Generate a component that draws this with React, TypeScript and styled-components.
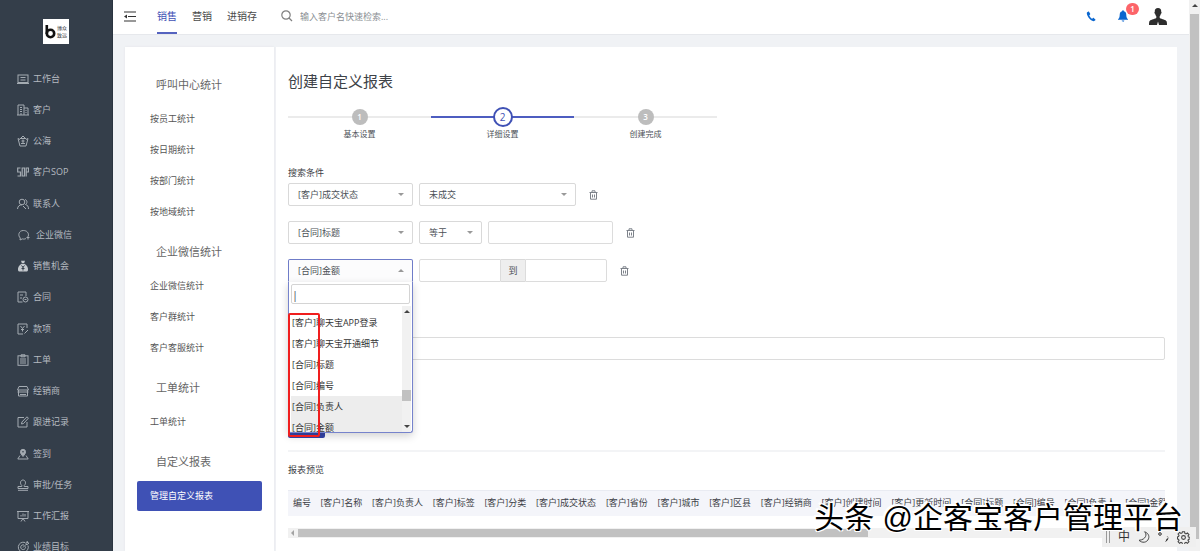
import React from 'react';
import styled, { createGlobalStyle } from 'styled-components';

const Global = createGlobalStyle`
  *, *::before, *::after { box-sizing: border-box; }
  html, body, #root { height: 100%; margin: 0; }
  body {
    overflow: hidden;
    font-family: "Open Sans", "Noto Sans CJK SC", sans-serif;
    font-size: 9px;
    line-height: 16px;
    color: #4c5157;
    background: #f0f2f5;
  }
  button, input, select { font: inherit; color: inherit; margin: 0; }
  a { color: inherit; text-decoration: none; }
  ul { list-style: none; margin: 0; padding: 0; }
  h1, h2, h3 { margin: 0; font-weight: 400; }
`;

const Shell = styled.div`
  display: flex;
  height: 100vh;
  overflow: hidden;
`;

/* ---------- dark navigation ---------- */
const Sidebar = styled.aside`
  display: flex;
  flex-direction: column;
  flex: 0 0 113px;
  overflow: hidden;
  background: #343e4a;
  border-right: 1px solid #2a3440;
  color: #b4bac0;
`;

const Logo = styled.div`
  display: flex;
  align-items: center;
  gap: 1px;
  flex: none;
  align-self: center;
  width: 26px;
  height: 25px;
  margin: 19px 0;
  padding-left: 2px;
  background: #fff;
  color: #333;
  font-size: 5px;
  line-height: 7px;
`;

const MainNav = styled.ul`
  display: flex;
  flex-direction: column;
  flex: 0 0 500px;
`;

const MainNavItem = styled.li`
  display: flex;
  flex: 1;
`;

const MainNavLink = styled.a<{ $wide?: boolean }>`
  display: flex;
  align-items: center;
  gap: ${(p) => (p.$wide ? 6 : 4)}px;
  padding-left: ${(p) => (p.$wide ? 18 : 17)}px;
  white-space: nowrap;
`;

const LineIcon = styled.svg`
  width: 12px;
  height: 12px;
  flex: none;
  fill: none;
  stroke: #a4abb2;
  stroke-width: 1;
`;

/* ---------- top bar ---------- */
const Main = styled.div`
  display: flex;
  flex-direction: column;
  flex: 1;
  min-width: 0;
`;

const TopBar = styled.header`
  display: flex;
  align-items: center;
  flex: 0 0 35px;
  padding: 0 22px 2px 11px;
  background: #fff;
  border-bottom: 1px solid #e6e8ec;
`;

const IconButton = styled.button`
  display: flex;
  padding: 0;
  border: 0;
  background: none;
`;

const Tabs = styled.nav`
  display: flex;
  gap: 15px;
  align-self: stretch;
  margin: 0 24px 0 21px;
`;

const Tab = styled.a<{ $active?: boolean }>`
  position: relative;
  font-size: 10px;
  line-height: 32px;
  color: ${(p) => (p.$active ? '#3f51b5' : '#4a4a4a')};
  &::after {
    content: '';
    display: ${(p) => (p.$active ? 'block' : 'none')};
    position: absolute;
    left: 0;
    right: 0;
    bottom: -2px;
    height: 2px;
    background: #5563bf;
  }
`;

const Search = styled.label`
  display: flex;
  align-items: center;
  gap: 7px;
  flex: 1;
  input {
    width: 160px;
    height: 20px;
    padding: 0;
    border: 0;
    outline: 0;
    font-size: 9px;
  }
  input::placeholder { color: #8b8f94; }
`;

const TopActions = styled.div`
  display: flex;
  align-items: center;
`;

const BellButton = styled(IconButton)`
  position: relative;
  margin: 0 21px 0 22px;
`;

const Badge = styled.span`
  position: absolute;
  top: -7px;
  left: 8px;
  width: 13px;
  height: 12px;
  border-radius: 6px;
  background: #fc6469;
  color: #fff;
  font-size: 8px;
  font-weight: 600;
  line-height: 12px;
  text-align: center;
`;

/* ---------- work area ---------- */
const Work = styled.div`
  display: flex;
  flex: 1;
  min-height: 0;
  gap: 2px;
  padding: 12px 12px 0;
`;

const ReportNav = styled.nav`
  flex: 0 0 149px;
  padding: 14px 12px 0;
  background: #fff;
  box-shadow: 0 0 2px #e2e4e8;
`;

const GroupTitle = styled.h2`
  height: 43px;
  padding: 4px 0 0 19px;
  font-size: 11px;
  line-height: 40px;
  color: #666;
`;

const ReportLink = styled.a<{ $active?: boolean }>`
  display: block;
  height: ${(p) => (p.$active ? 30 : 31)}px;
  padding-left: 13px;
  line-height: 30px;
  border-radius: 2px;
  background: ${(p) => (p.$active ? '#3f51b5' : 'transparent')};
  color: ${(p) => (p.$active ? '#fff' : '#555')};
`;

const Panel = styled.main`
  flex: 1;
  min-width: 0;
  padding: 22px 12px 0;
  background: #fff;
`;

const Title = styled.h1`
  font-size: 15px;
  line-height: 24px;
  color: #3d4247;
`;

const Steps = styled.ol`
  display: flex;
  width: 429px;
  margin: 14px 0 24px;
  padding: 0;
  list-style: none;
`;

const Step = styled.li<{ $active?: boolean }>`
  display: flex;
  flex-direction: column;
  align-items: center;
  flex: 1;
  font-size: 8px;
  line-height: 14px;
  background: linear-gradient(${(p) => (p.$active ? '#4d5dc0, #4d5dc0' : '#ebebeb, #ebebeb')}) 0 9px / 100% 2px no-repeat;
`;

const StepDot = styled.span<{ $active?: boolean }>`
  display: grid;
  place-items: center;
  width: ${(p) => (p.$active ? 20 : 16)}px;
  height: ${(p) => (p.$active ? 20 : 16)}px;
  margin: ${(p) => (p.$active ? 0 : 2)}px 0;
  border-radius: 50%;
  border: ${(p) => (p.$active ? '2px solid #3f51b5' : '0')};
  background: ${(p) => (p.$active ? '#fff' : '#bdbdbd')};
  color: ${(p) => (p.$active ? '#3f51b5' : '#fff')};
  font-size: ${(p) => (p.$active ? 10 : 8)}px;
  font-weight: ${(p) => (p.$active ? 400 : 600)};
`;

const Label = styled.h3`
  font-size: 9px;
  line-height: 16px;
  color: #3c4046;
`;

const Filter = styled.div`
  display: flex;
  align-items: center;
  gap: 6px;
  height: 23px;
  margin: 2px 0 15px;
`;

const SelectBox = styled.div<{ $width: number }>`
  display: flex;
  align-items: center;
  position: relative;
  width: ${(p) => p.$width}px;
  select {
    appearance: none;
    width: 100%;
    height: 23px;
    padding: 0 20px 0 9px;
    border: 1px solid #d9d9d9;
    border-radius: 2px;
    background: #fff;
    outline: 0;
  }
`;

const Caret = styled.span<{ $up?: boolean }>`
  position: absolute;
  right: 9px;
  border: 3px solid transparent;
  border-top-width: ${(p) => (p.$up ? 0 : 3)}px;
  border-bottom-width: ${(p) => (p.$up ? 3 : 0)}px;
  border-top-color: #999;
  border-bottom-color: #999;
`;

const TextInput = styled.input<{ $width?: number }>`
  width: ${(p) => (p.$width ? `${p.$width}px` : '100%')};
  height: 23px;
  padding: 0 8px;
  border: 1px solid #dcdcdc;
  border-radius: 2px;
  background: #fff;
  outline: 0;
`;

const Range = styled.div`
  display: flex;
  ${TextInput}:first-child { border-radius: 2px 0 0 2px; }
  ${TextInput}:last-child { border-radius: 0 2px 2px 0; }
`;

const RangeText = styled.span`
  width: 24px;
  height: 23px;
  border: solid #d9d9d9;
  border-width: 1px 0;
  background: #eee;
  line-height: 21px;
  text-align: center;
`;

const DeleteButton = styled(IconButton)`
  margin-left: 7px;
`;

const OpenTrigger = styled.button`
  width: 100%;
  height: 23px;
  padding: 0 9px;
  border: 1px solid #6f7cc8;
  border-bottom-color: transparent;
  border-radius: 2px 2px 0 0;
  background: #fcfcfd;
  text-align: left;
`;

const Menu = styled.div`
  position: absolute;
  top: 23px;
  left: 0;
  z-index: 2;
  width: 100%;
  height: 151px;
  padding: 2px 1px 1px 2px;
  border: 1px solid #7683cc;
  border-top: 0;
  border-radius: 0 0 3px 3px;
  background: #fff;
  box-shadow: 0 3px 8px rgba(0, 0, 0, 0.18);
`;

const MenuSearch = styled.input`
  display: block;
  width: 119px;
  height: 20px;
  padding: 0;
  border: 1px solid #d4d4d4;
  border-radius: 2px;
  outline: 0;
  font-size: 11px;
`;

const MenuBody = styled.div`
  display: flex;
  height: 126px;
  margin-top: 2px;
`;

const Options = styled.ul`
  flex: 1;
  padding-top: 6px;
  overflow: hidden;
`;

const Option = styled.li<{ $shade?: boolean }>`
  height: 21px;
  padding-left: 1px;
  line-height: 21px;
  white-space: nowrap;
  color: #333;
  background: ${(p) => (p.$shade ? '#ededed' : 'transparent')};
`;

const MenuTrack = styled.div`
  display: flex;
  flex-direction: column;
  align-items: center;
  justify-content: space-between;
  width: 9px;
  padding: 4px 0;
  background: #f1f1f1;
`;

const MenuThumb = styled.div`
  width: 9px;
  height: 11px;
  margin-top: 73px;
  margin-bottom: 20px;
  background: #c1c1c1;
`;

const Triangle = styled.span<{ $up?: boolean; $tone?: string }>`
  width: 0;
  border: 3px solid transparent;
  border-top-width: ${(p) => (p.$up ? 0 : 3)}px;
  border-bottom-width: ${(p) => (p.$up ? 3 : 0)}px;
  border-top-color: ${(p) => p.$tone ?? '#444'};
  border-bottom-color: ${(p) => p.$tone ?? '#444'};
`;

const Highlight = styled.div`
  position: absolute;
  top: 54px;
  left: 0;
  z-index: 3;
  width: 32px;
  height: 124px;
  border: 2px solid #f01e1e;
  border-radius: 2px;
`;

const NameField = styled.div`
  margin-top: 55px;
`;

const Submit = styled.button`
  display: block;
  width: 37px;
  height: 23px;
  margin: 55px 0 12px;
  padding: 0;
  border: 0;
  border-radius: 2px;
  background: #3444aa;
  color: #fff;
`;

const Preview = styled.section`
  padding-top: 10px;
  border-top: 2px solid #f3f4f6;
`;

const TableClip = styled.div`
  margin-top: 12px;
  overflow: hidden;
`;

const Table = styled.table`
  width: 884px;
  border-collapse: collapse;
  white-space: nowrap;
  background: #f4f5fa;
  th {
    height: 25px;
    padding: 0 4px 0 5px;
    border-top: 1px solid #e9ebf2;
    font-weight: 400;
    color: #3c4046;
    text-align: left;
  }
`;

const HTrack = styled.div`
  display: flex;
  align-items: center;
  height: 10px;
  margin-top: 12px;
  background: #f1f1f1;
`;

const HArrow = styled.span`
  margin: 0 4px 0 3px;
  border: 3px solid transparent;
  border-left-width: 0;
  border-right-color: #a3a3a3;
`;

const HThumb = styled.div`
  width: 65%;
  height: 8px;
  background: #c1c1c1;
`;

/* ---------- window scroll bar ---------- */
const PageTrack = styled.div`
  display: flex;
  flex-direction: column;
  align-items: center;
  flex: 0 0 11px;
  padding-top: 4px;
  background: #f1f1f1;
`;

const PageThumb = styled.div`
  width: 9px;
  height: 96%;
  margin: 7px 0 11px;
  background: #c1c1c1;
`;

/* ---------- floating layers ---------- */
const ImeBar = styled.div`
  position: absolute;
  right: 4px;
  bottom: 4px;
  z-index: 4;
  display: flex;
  align-items: center;
  gap: 8px;
  height: 20px;
  padding: 0 6px 0 4px;
  background: #efefef;
  color: #333;
  font-size: 12px;
`;

const Watermark = styled.div`
  position: absolute;
  right: 17px;
  bottom: 11px;
  z-index: 5;
  font-family: "Liberation Sans", "Noto Sans CJK SC", sans-serif;
  font-size: 30px;
  line-height: 44px;
  white-space: nowrap;
  color: #000;
  text-shadow: -1px -1px 0 #fff, 1px -1px 0 #fff, -1px 1px 0 #fff, 1px 1px 0 #fff, -2px -2px 0 #fff;
`;

const navItems: { text: string; wide?: boolean; icon: React.ReactNode }[] = [
  { text: '工作台', icon: <><rect x="1" y="2" width="10" height="7.500" /><path d="M3.500 4.500h5M3.500 7h5M0 10.500h12" /></> },
  { text: '客户', icon: <><path d="M1 11V1h6v10M7 4h4v7M0 11h12M3 3.500h2M3 5.500h2M3 7.500h2M9 6v1M9 8v1M4 9v2" /></> },
  { text: '公海', icon: <><path d="M3 3.500h6M1 3.500l2 7.500h6l2-7.500-2 1M1 3.500l2 1M4 3l2-2 2 2M6 4.500v4M4.500 6h3M4 8.500h4" /></> },
  { text: '客户SOP', icon: <><path d="M3.500 2H.7v4h2.800v4H.5M5.200 2h2.300v8H5.200zM9.200 10.500V2h2.300v4H9.200" strokeWidth="1.200" /></> },
  { text: '联系人', icon: <><circle cx="5" cy="4" r="2.800" /><path d="M.5 11c.3-3 2-4.200 4.500-4.200M8 1.500c2.500.5 2.500 4 .5 5 2 .5 3 2 3 4.500M6 8l3 3" /></> },
  { text: '企业微信', wide: true, icon: <><path d="M8 9.500c-1 .6-2.500.8-3.700.4L2 11l.3-2C-.5 6.500.8 1.500 5.300 1.500c3.700 0 5.700 2.500 5 5.500M8.500 8.500h3M10 7v3.500" /></> },
  { text: '销售机会', icon: <><path d="M4 .8h4L7.200 3h-2.400zM4.600 3.800h2.800c2.500 1.500 4 4 3.600 6.200-.2 1-.8 1.500-1.800 1.500H2.800c-1 0-1.600-.5-1.800-1.500-.4-2.200 1.100-4.700 3.600-6.200z" fill="#c3c8cd" stroke="none" /><path d="M4.500 5.500L6 7.300l1.500-1.800M6 7v3.500M4.500 8.500h3" stroke="#343e4a" /></> },
  { text: '合同', icon: <><path d="M5.500 11H1V1h8v4M3 4h3M3 7h2" /><circle cx="8.500" cy="8.500" r="2.500" /><path d="M7.500 8.500h2" /></> },
  { text: '款项', icon: <><path d="M6 11H1V1h9v4M3.500 3l2 2.500 2-2.500M5.500 5.500v3M4 6.500h3M7.500 10.500L11 7" /></> },
  { text: '工单', icon: <><rect x="1" y="1.800" width="10" height="9.500" /><path d="M4 .8h4v2H4zM3 5h6M3 7h6M3 9h6" /></> },
  { text: '经销商', icon: <><path d="M2 1.500h8l1.500 3.500H.5zM1.500 5v6h9V5M.5 7h11M3 9.500h6" /></> },
  { text: '跟进记录', icon: <><path d="M7 1.500H1v9.500h9V6M4.500 8l.4-2L10 .8l1.400 1.400L6.500 7.500z" /></> },
  { text: '签到', icon: <><path d="M6 8.500C4.500 6.500 3.500 5.500 3.500 3.800a2.500 2.500 0 015 0C8.500 5.500 7.500 6.500 6 8.500z" fill="#a4abb2" /><circle cx="6" cy="3.700" r=".8" fill="#343e4a" stroke="none" /><path d="M3 7.500L.8 11h10.400L9 7.500" /></> },
  { text: '审批/任务', icon: <><path d="M4.800 6.500C2.500 4.500 3.500 1 6 1s3.500 3.500 1.200 5.500M4.800 6.500V7.500H1v2h10v-2H7.200v-1M1 11.300h10" /></> },
  { text: '工作汇报', icon: <><path d="M0 1.500h12M1 1.500v7h10v-7M4 11.500L6 8.500l2 3M4 6.500V5M6 6.500V3.500M8 6.500V4" /></> },
  { text: '业绩目标', icon: <><path d="M8 1.500a5 5 0 103 3M7 4a2.400 2.400 0 101.400 1.500M6 6.500L9 3.500M9 3.500V1.500L10.500.5v1.500H12L10.500 3.500z" /></> },
];

const reportGroups = [
  { title: '呼叫中心统计', links: ['按员工统计', '按日期统计', '按部门统计', '按地域统计'] },
  { title: '企业微信统计', links: ['企业微信统计', '客户群统计', '客户客服统计'] },
  { title: '工单统计', links: ['工单统计'] },
  { title: '自定义报表', links: ['管理自定义报表'] },
];

const columns = [
  '编号', '[客户]名称', '[客户]负责人', '[客户]标签', '[客户]分类', '[客户]成交状态', '[客户]省份', '[客户]城市',
  '[客户]区县', '[客户]经销商', '[客户]创建时间', '[客户]更新时间', '[合同]标题', '[合同]编号', '[合同]负责人', '[合同]金额',
];

const options = ['[客户]聊天宝APP登录', '[客户]聊天宝开通细节', '[合同]标题', '[合同]编号', '[合同]负责人', '[合同]金额'];

const Trash = () => (
  <DeleteButton aria-label="删除">
    <svg width="9" height="10" viewBox="0 0 9 10" fill="none" stroke="#7d828a">
      <path d="M.5 2.500h8M3 2V.8h3V2M1.500 2.500v6.700h6V2.500M3.500 4.500v3M5.500 4.500v3" />
    </svg>
  </DeleteButton>
);

const Select = ({ width, value, name }: { width: number; value: string; name: string }) => (
  <SelectBox $width={width}>
    <select aria-label={name} defaultValue={value}>
      <option>{value}</option>
    </select>
    <Caret />
  </SelectBox>
);

export default function App() {
  return (
    <Shell>
      <Global />
      <Sidebar>
        <Logo>
          <svg width="11" height="15" viewBox="0 0 11 15" fill="none" stroke="#111" strokeWidth="2.600">
            <path d="M1.800 1v9" />
            <circle cx="5.500" cy="9.500" r="3.700" />
          </svg>
          <span>博众<br />致远</span>
        </Logo>
        <MainNav>
          {navItems.map((item) => (
            <MainNavItem key={item.text}>
              <MainNavLink href="#" $wide={item.wide}>
                <LineIcon viewBox="0 0 12 12">{item.icon}</LineIcon>
                {item.text}
              </MainNavLink>
            </MainNavItem>
          ))}
        </MainNav>
      </Sidebar>

      <Main>
        <TopBar>
          <IconButton aria-label="收起菜单">
            <svg width="12" height="11" viewBox="0 0 12 11" fill="none" stroke="#333" strokeWidth="1.200">
              <path d="M0 1h12M4 5.500h8M0 10h12" />
              <path d="M0 5.500L3 3.500v4z" fill="#333" stroke="none" />
            </svg>
          </IconButton>
          <Tabs>
            <Tab href="#" $active>销售</Tab>
            <Tab href="#">营销</Tab>
            <Tab href="#">进销存</Tab>
          </Tabs>
          <Search>
            <svg width="12" height="12" viewBox="0 0 12 12" fill="none" stroke="#808080" strokeWidth="1.200">
              <circle cx="5" cy="5" r="4.200" />
              <path d="M8 8l3 3" />
            </svg>
            <input placeholder="输入客户名快速检索..." aria-label="搜索客户" />
          </Search>
          <TopActions>
            <IconButton aria-label="电话">
              <svg width="10" height="11" viewBox="0 0 11 12" fill="#0a66cf">
                <path d="M2.600.5L1 1.500C.2 4 4 10.500 8.500 11.200L10.300 10c.2-.3.200-.6 0-.8L8.500 7.600c-.3-.2-.6-.2-.8 0l-.9.800C5.300 7.800 4 6 3.600 4.500l.9-.8c.2-.2.200-.4.100-.7L3.300.7c-.1-.2-.4-.3-.7-.2z" />
              </svg>
            </IconButton>
            <BellButton aria-label="通知">
              <svg width="10" height="12" viewBox="0 0 10 12" fill="#0a66cf">
                <path d="M5 .3c.6 0 .9.400.9.900C7.700 1.700 8.300 3 8.300 5c0 2 .5 3.200 1.700 4.300v.5H0v-.5C1.200 8.200 1.700 7 1.700 5c0-2 .6-3.300 2.400-3.800C4.100.7 4.400.3 5 .3zM3.700 10.500h2.600c0 1.600-2.600 1.600-2.600 0z" />
              </svg>
              <Badge>1</Badge>
            </BellButton>
            <IconButton aria-label="个人中心">
              <svg width="18" height="17" viewBox="0 0 18 17" fill="#2d2d2d">
                <path d="M9 0c2.200 0 3.400 1.200 3.200 3.700.6.200.4 1.800-.3 2.100-.2 1.200-.7 2-1.200 2.500v1.600c2.200 1.300 6.300 1.500 7 3.600.3 1 .3 2.200.3 3.500h-8L9 13.500 8 17H0c0-1.300 0-2.500.3-3.500.7-2.100 4.800-2.300 7-3.600V8.300c-.5-.5-1-1.300-1.200-2.500-.7-.3-.9-1.900-.3-2.100C5.600 1.200 6.800 0 9 0z" />
              </svg>
            </IconButton>
          </TopActions>
        </TopBar>

        <Work>
          <ReportNav>
            {reportGroups.map((group) => (
              <React.Fragment key={group.title}>
                <GroupTitle>{group.title}</GroupTitle>
                {group.links.map((link) => (
                  <ReportLink key={link} href="#" $active={link === '管理自定义报表'}>{link}</ReportLink>
                ))}
              </React.Fragment>
            ))}
          </ReportNav>

          <Panel>
            <Title>创建自定义报表</Title>
            <Steps>
              <Step><StepDot>1</StepDot>基本设置</Step>
              <Step $active><StepDot $active>2</StepDot>详细设置</Step>
              <Step><StepDot>3</StepDot>创建完成</Step>
            </Steps>

            <Label>搜索条件</Label>
            <Filter>
              <Select width={125} value="[客户]成交状态" name="条件字段一" />
              <Select width={157} value="未成交" name="成交状态" />
              <Trash />
            </Filter>
            <Filter>
              <Select width={125} value="[合同]标题" name="条件字段二" />
              <Select width={63} value="等于" name="比较方式" />
              <TextInput $width={125} aria-label="合同标题" />
              <Trash />
            </Filter>
            <Filter>
              <SelectBox $width={125}>
                <OpenTrigger aria-haspopup="listbox" aria-expanded="true">[合同]金额</OpenTrigger>
                <Caret $up />
                <Menu>
                  <MenuSearch aria-label="搜索字段" defaultValue="|" />
                  <MenuBody>
                    <Options role="listbox">
                      {options.map((option, i) => (
                        <Option key={option} role="option" aria-selected={i === 5} $shade={i > 3}>{option}</Option>
                      ))}
                    </Options>
                    <MenuTrack>
                      <Triangle $up />
                      <MenuThumb />
                      <Triangle />
                    </MenuTrack>
                  </MenuBody>
                </Menu>
                <Highlight />
              </SelectBox>
              <Range>
                <TextInput $width={82} aria-label="最小金额" />
                <RangeText>到</RangeText>
                <TextInput $width={82} aria-label="最大金额" />
              </Range>
              <Trash />
            </Filter>

            <NameField>
              <TextInput aria-label="显示字段" />
            </NameField>
            <Submit aria-label="提交" />

            <Preview>
              <Label>报表预览</Label>
              <TableClip>
                <Table>
                  <thead>
                    <tr>{columns.map((column) => <th key={column} scope="col">{column}</th>)}</tr>
                  </thead>
                </Table>
              </TableClip>
              <HTrack><HArrow /><HThumb /></HTrack>
            </Preview>
          </Panel>
        </Work>
      </Main>

      <PageTrack>
        <Triangle $up />
        <PageThumb />
      </PageTrack>

      <ImeBar>
        <svg width="4" height="12" viewBox="0 0 4 12" stroke="#999"><path d="M.5 0v12M3.500 0v12" /></svg>
        <span>中</span>
        <svg width="12" height="12" viewBox="0 0 12 12" fill="none" stroke="#444"><path d="M6.500.8c3 2 1.500 8-5.500 8.500 3 3 8 2.500 9.500-1.500C11.800 4.500 9.500 1.500 6.500.8z" /></svg>
        <svg width="11" height="12" viewBox="0 0 11 12" fill="none" stroke="#333"><circle cx="2" cy="3" r="1.300" /><path d="M8.500 5a1.500 1.500 0 11-.1 3c.1 1-.5 2-1.700 3 2.600-.8 4-3 3.600-4.600C10.100 5.500 9.400 5 8.500 5z" fill="#222" stroke="none" /></svg>
        <svg width="13" height="13" viewBox="0 0 24 24" fill="none" stroke="#444" strokeWidth="2"><circle cx="12" cy="12" r="3.500" /><path d="M10 1.500h4l.6 3 2 .9 2.600-1.700 2.800 2.800-1.700 2.600.8 2 3 .6v3l-3 .6-.8 2 1.700 2.600-2.800 2.800-2.600-1.700-2 .9-.6 3h-4l-.6-3-2-.9-2.600 1.700L2 19.900l1.700-2.600-.8-2-2-.6v-4l2-.6.8-2L2 5.500l2.800-2.800 2.600 1.700 2-.9z" /></svg>
      </ImeBar>
      <Watermark>头条 @企客宝客户管理平台</Watermark>
    </Shell>
  );
}
